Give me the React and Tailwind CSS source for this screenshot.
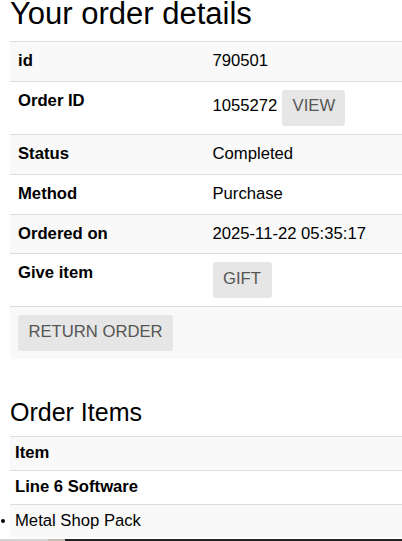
import React from 'react';

// order summary rows; "btn" means the value cell carries a button
const details = [
  { label: 'id', value: '790501' },
  { label: 'Order ID', value: '1055272', btn: 'VIEW', btnW: 'w-[63px]' },
  { label: 'Status', value: 'Completed' },
  { label: 'Method', value: 'Purchase' },
  { label: 'Ordered on', value: '2025-11-22 05:35:17' },
  { label: 'Give item', btn: 'GIFT', btnW: 'w-[59px]' },
];

const Btn = ({ children, className = '' }) => (
  <button
    type="button"
    className={`h-[36px] pt-[5px] pb-[8px] leading-[22.86px] text-[16.67px] text-center text-[#555] bg-[#e6e6e6] rounded-[3px] uppercase whitespace-nowrap ${className}`}
  >
    {children}
  </button>
);

export default function App() {
  return (
    <div className="w-[402px] h-[541px] overflow-hidden bg-white text-black font-['Liberation_Sans',Arial,sans-serif] text-[16.67px] leading-[22.86px]">
      <div className="pl-[10px]">
        <h1 className="text-[31px] leading-[28px] font-normal mb-[13px] whitespace-nowrap">Your order details</h1>

        <div className="w-[392px]">
          {details.map((row, i) => (
            <div
              key={row.label}
              className={`flex border-t border-[#ddd] ${i % 2 === 0 ? 'bg-[#f9f9f9]' : 'bg-white'}`}
            >
              <div className="w-[194.5px] shrink-0 p-[8px] font-bold">{row.label}</div>
              <div className="flex-1 p-[8px] flex items-baseline">
                {row.value && <span>{row.value}</span>}
                {row.btn && (
                  <Btn className={`${row.btnW} ${row.value ? 'ml-[5px]' : ''}`}>{row.btn}</Btn>
                )}
              </div>
            </div>
          ))}
          <div className="border-t border-[#ddd] bg-[#f9f9f9] p-[8px] h-[52.7px] box-border">
            <Btn className="w-[155px]">Return Order</Btn>
          </div>
        </div>

        <h2 className="text-[25px] leading-[24px] font-normal mt-[40.4px] mb-[12.9px]">Order Items</h2>

        <div className="w-[392px]">
          <div className="border-t border-[#ddd] bg-[#f9f9f9] p-[5px] font-bold">Item</div>
          <div className="border-t border-[#ddd] bg-white p-[5px] font-bold">Line 6 Software</div>
          <div className="flex -ml-[10px]">
            <div className="w-[10px] shrink-0 pt-[14.5px] pl-[1px]">
              <div className="w-[4px] h-[4px] rounded-full bg-black" />
            </div>
            <div className="flex-1 border-t border-[#ddd] bg-[#f9f9f9] p-[5px] pb-[4px]">Metal Shop Pack</div>
          </div>
        </div>
      </div>

      <div className="flex h-[3px] mt-[2px]">
        <div className="w-[48px] bg-[#d4d4d4]" />
        <div className="w-[17px] bg-[#c9beb3]" />
        <div className="flex-1 bg-[#222]" />
      </div>
    </div>
  );
}
